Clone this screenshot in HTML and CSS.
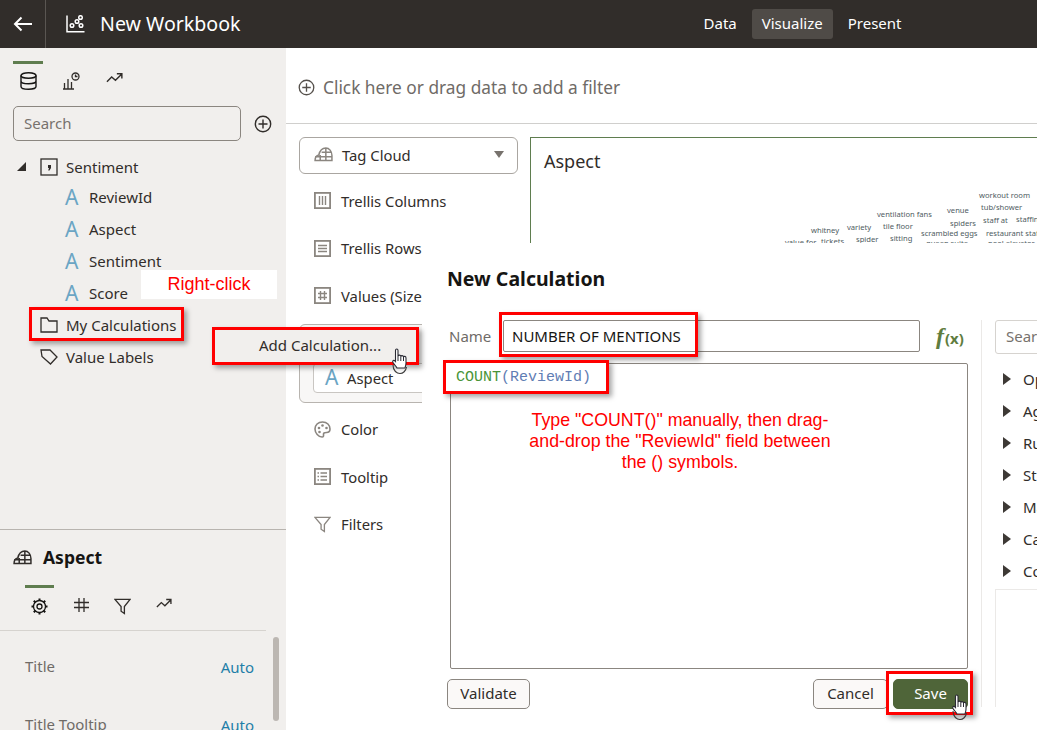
FILE: index.html
```html
<!DOCTYPE html>
<html lang="en">
<head>
  <meta charset="UTF-8">
  <meta name="viewport" content="width=device-width, initial-scale=1.0">
  <title>New Workbook</title>
  <link rel="stylesheet" href="styles.css">
</head>
<body>
  <svg class="defs" aria-hidden="true">
    <symbol id="i-tagcloud" viewBox="0 0 20 16">
      <path d="M1 14.500 C1 11 2 9 5 8.500 C6 4 9 1 12.500 1 C16 1 19 4.500 19 9 V14.500 Z M1 10.500 H19 M8 5.500 H17.500 M6.500 14.500 V8.500 M12.500 14.500 V1.500" fill="none" stroke="currentColor" stroke-width="1.600"/>
    </symbol>
    <symbol id="i-trend" viewBox="0 0 18 12">
      <path d="M1 10 L6 5 L10 8.500 L16.500 2 M11.500 1.500 H16.800 V6.500" fill="none" stroke="currentColor" stroke-width="1.500"/>
    </symbol>
    <symbol id="i-plus" viewBox="0 0 18 18">
      <circle cx="9" cy="9" r="7.700" fill="none" stroke="currentColor" stroke-width="1.400"/>
      <path d="M9 4.500 V13.500 M4.500 9 H13.500" stroke="currentColor" stroke-width="1.400"/>
    </symbol>
    <symbol id="i-funnel" viewBox="0 0 18 18">
      <path d="M1 1.500 H17 L11 9 V16.500 L7.500 14 V9 Z" fill="none" stroke="currentColor" stroke-width="1.400"/>
    </symbol>
    <symbol id="i-hand" viewBox="0 0 20 30">
      <path d="M2 17 C2 23 6 25.500 9 25.500 C12 25.500 15 23 15.500 19" fill="none" stroke="#3a3a3a" stroke-width="1.100"/>
      <path d="M4.500 2.500 C4.500 .5 7 .5 7 2.500 V8 C7.500 6.800 9.500 6.800 9.800 8.500 C10.200 7.300 12.200 7.300 12.500 9 C13 8 15 8 15 10 V15 C15 17 14.500 18.500 14 20 H6 C5.500 18.500 3.500 17 2 14.500 C1 12.500 2.800 11.500 4.500 13.500 Z" fill="#fff" stroke="#2a2a33" stroke-width="1.100"/>
      <path d="M7 8 V13 M9.800 8.500 V13 M12.500 9 V13" stroke="#2a2a33" stroke-width="1"/>
    </symbol>
  </svg>

  <div class="page">
    <header class="topbar">
      <button class="back-btn" aria-label="Back">
        <svg width="20" height="16" viewBox="0 0 20 16"><path d="M19 8 H2 M8.500 1.500 L2 8 L8.500 14.500" fill="none" stroke="#fff" stroke-width="2"/></svg>
      </button>
      <div class="brand">
        <svg width="19" height="18" viewBox="0 0 19 18"><path d="M1 .5 V16.800 H18.500" fill="none" stroke="#fff" stroke-width="1.500"/><g fill="none" stroke="#fff" stroke-width="1.500"><circle cx="6" cy="10.500" r="1.800"/><circle cx="11" cy="6.500" r="1.800"/><circle cx="14.500" cy="2.500" r="1.800"/><circle cx="15" cy="10.500" r="1.800"/></g></svg>
        <h1>New Workbook</h1>
      </div>
      <nav class="modes">
        <a href="#data">Data</a>
        <a href="#visualize" class="active">Visualize</a>
        <a href="#present">Present</a>
      </nav>
    </header>

    <main class="main">
      <aside class="sidebar">
        <div class="side-top">
          <div class="tabs">
            <span class="tab active">
              <svg width="17" height="18" viewBox="0 0 17 18"><g fill="none" stroke="#161513" stroke-width="1.400"><ellipse cx="8.500" cy="3.500" rx="7.500" ry="2.800"/><path d="M1 3.500 V14.500 C1 16 4 17.300 8.500 17.300 C13 17.300 16 16 16 14.500 V3.500 M1 9 C1 10.500 4 11.800 8.500 11.800 C13 11.800 16 10.500 16 9"/></g></svg>
            </span>
            <span class="tab">
              <svg width="18" height="18" viewBox="0 0 18 18"><g fill="none" stroke="#312d2a" stroke-width="1.300"><path d="M1 17 H12 M2.500 17 V11 M6 17 V7 M9.500 17 V10"/><circle cx="13.500" cy="4.500" r="3.500"/><path d="M13.500 2.500 V4.500 H15.500"/></g></svg>
            </span>
            <span class="tab">
              <svg width="17" height="12" class="ink"><use href="#i-trend"/></svg>
            </span>
          </div>
          <div class="search-row">
            <input class="side-search" placeholder="Search">
            <svg width="18" height="18" class="ink"><use href="#i-plus"/></svg>
          </div>
          <ul class="tree">
            <li class="tree-row root">
              <span class="tri-open"></span>
              <svg width="18" height="18" viewBox="0 0 18 18"><rect x="1" y="1" width="16" height="16" fill="none" stroke="#312d2a" stroke-width="1.300"/><path d="M8 7 H11 V10 L9.500 12.500 H8.200 L9 10 H8 Z" fill="#312d2a"/></svg>
              <span>Sentiment</span>
            </li>
            <li class="tree-row attr"><span class="letter">A</span><span>ReviewId</span></li>
            <li class="tree-row attr"><span class="letter">A</span><span>Aspect</span></li>
            <li class="tree-row attr"><span class="letter">A</span><span>Sentiment</span></li>
            <li class="tree-row attr"><span class="letter">A</span><span>Score</span></li>
            <li class="tree-row folder">
              <svg width="18" height="16" viewBox="0 0 18 16"><path d="M1 15 V1 H7 L9 4 H17 V15 Z" fill="none" stroke="#312d2a" stroke-width="1.300"/></svg>
              <span>My Calculations</span>
            </li>
            <li class="tree-row folder">
              <svg width="18" height="16" viewBox="0 0 18 16"><path d="M1 1 H10 L17 8 L10.500 15 L2 7.500 Z" fill="none" stroke="#312d2a" stroke-width="1.300"/></svg>
              <span>Value Labels</span>
            </li>
          </ul>
        </div>

        <div class="side-bottom">
          <div class="props-head">
            <svg width="19" height="15" class="ink"><use href="#i-tagcloud"/></svg>
            <h2>Aspect</h2>
          </div>
          <div class="prop-tabs">
            <span class="prop-tab active">
              <svg width="17" height="17" viewBox="0 0 17 17"><g fill="none" stroke="#161513"><circle cx="8.500" cy="8.500" r="2.500" stroke-width="1.300"/><circle cx="8.500" cy="8.500" r="6" stroke-width="1.300"/><path d="M8.500 .5 V3 M8.500 14 V16.500 M.5 8.500 H3 M14 8.500 H16.500 M2.800 2.800 L4.500 4.500 M12.500 12.500 L14.200 14.200 M14.200 2.800 L12.500 4.500 M4.500 12.500 L2.800 14.200" stroke-width="2"/></g></svg>
            </span>
            <span class="prop-tab">
              <svg width="15" height="14" viewBox="0 0 15 14"><path d="M5 0 V14 M10 0 V14 M0 4.500 H15 M0 9.500 H15" fill="none" stroke="#312d2a" stroke-width="1.300"/></svg>
            </span>
            <span class="prop-tab"><svg width="17" height="17" class="ink"><use href="#i-funnel"/></svg></span>
            <span class="prop-tab"><svg width="16" height="11" class="ink"><use href="#i-trend"/></svg></span>
          </div>
          <div class="prop-list">
            <div class="prop-row"><span class="prop-name">Title</span><span class="prop-val">Auto</span></div>
            <div class="prop-row"><span class="prop-name">Title Tooltip</span><span class="prop-val">Auto</span></div>
            <span class="scroll-thumb"></span>
          </div>
        </div>
      </aside>

      <section class="canvas">
        <div class="filter-bar">
          <svg width="17" height="17" class="dim"><use href="#i-plus"/></svg>
          <span>Click here or drag data to add a filter</span>
        </div>
        <div class="workspace">
          <div class="grammar">
            <div class="viz-select">
              <svg width="19" height="15" class="muted"><use href="#i-tagcloud"/></svg>
              <span>Tag Cloud</span>
              <span class="tri-down"></span>
            </div>
            <div class="gram-row">
              <svg width="17" height="17" viewBox="0 0 17 17"><g fill="none" stroke="#8b8680" stroke-width="1.800"><rect x=".9" y=".9" width="15.200" height="15.200"/><path d="M5.500 4 V13 M8.500 4 V13 M11.500 4 V13" stroke-width="1.400"/></g></svg>
              <span>Trellis Columns</span>
            </div>
            <div class="gram-row">
              <svg width="17" height="17" viewBox="0 0 17 17"><g fill="none" stroke="#8b8680" stroke-width="1.800"><rect x=".9" y=".9" width="15.200" height="15.200"/><path d="M4 5.500 H13 M4 8.500 H13 M4 11.500 H13" stroke-width="1.400"/></g></svg>
              <span>Trellis Rows</span>
            </div>
            <div class="gram-row">
              <svg width="17" height="17" viewBox="0 0 17 17"><g fill="none" stroke="#8b8680" stroke-width="1.800"><rect x=".9" y=".9" width="15.200" height="15.200"/><path d="M6.500 4 V13 M10.500 4 V13 M4 6.500 H13 M4 10.500 H13" stroke-width="1.400"/></g></svg>
              <span>Values (Size)</span>
            </div>
            <div class="drop-box">
              <div class="pill"><span class="letter">A</span><span>Aspect</span></div>
            </div>
            <div class="gram-row">
              <svg width="17" height="17" viewBox="0 0 17 17"><path d="M8.500 1 C4 1 1 4 1 8 C1 12 4.500 16 8 16 C10 16 9.500 14 9.500 13 C9.500 11.500 11 11.500 12.500 11.500 C15 11.500 16 10 16 8 C16 4 13 1 8.500 1 Z" fill="none" stroke="#8b8680" stroke-width="1.600"/><circle cx="5" cy="7" r="1.300" fill="#8b8680"/><circle cx="8.500" cy="4.500" r="1.300" fill="#8b8680"/><circle cx="12.500" cy="7" r="1.300" fill="#8b8680"/><circle cx="5.500" cy="11" r="1.300" fill="#8b8680"/></svg>
              <span>Color</span>
            </div>
            <div class="gram-row">
              <svg width="17" height="17" viewBox="0 0 17 17"><g fill="none" stroke="#8b8680" stroke-width="1.800"><rect x=".9" y=".9" width="15.200" height="15.200"/><path d="M6.500 5 H13 M6.500 8.500 H13 M6.500 12 H13 M3.500 5 H5 M3.500 8.500 H5 M3.500 12 H5" stroke-width="1.400"/></g></svg>
              <span>Tooltip</span>
            </div>
            <div class="gram-row">
              <svg width="17" height="17" class="muted"><use href="#i-funnel"/></svg>
              <span>Filters</span>
            </div>
          </div>

          <div class="viz">
            <h3>Aspect</h3>
            <span class="word w1">workout room</span>
            <span class="word w2">tub/shower</span>
            <span class="word w3">staff at</span>
            <span class="word w4">staffing</span>
            <span class="word w5">restaurant staff</span>
            <span class="word w6">pool elevator</span>
            <span class="word w7">venue</span>
            <span class="word w8">spiders</span>
            <span class="word w9">scrambled eggs</span>
            <span class="word w10">queen suite</span>
            <span class="word w11">ventilation fans</span>
            <span class="word w12">tile floor</span>
            <span class="word w13">sitting</span>
            <span class="word w14">variety</span>
            <span class="word w15">spider</span>
            <span class="word w16">whitney</span>
            <span class="word w17">tickets</span>
            <span class="word w18">value for</span>
          </div>
        </div>
      </section>
    </main>

    <div class="dialog">
      <div class="dialog-left">
        <h2 class="dialog-title">New Calculation</h2>
        <div class="name-row">
          <label class="name-label">Name</label>
          <input class="name-input" value="NUMBER OF MENTIONS">
          <span class="fx"><i>f</i><b>(x)</b></span>
        </div>
        <div class="editor"></div>
        <div class="dialog-foot">
          <button class="btn">Validate</button>
          <button class="btn push">Cancel</button>
          <button class="btn primary">Save</button>
        </div>
      </div>
      <div class="dialog-right">
        <input class="func-search" placeholder="Search">
        <ul class="func-list">
          <li><span class="tri-right"></span>Operators</li>
          <li><span class="tri-right"></span>Aggregate</li>
          <li><span class="tri-right"></span>Running Aggregate</li>
          <li><span class="tri-right"></span>String</li>
          <li><span class="tri-right"></span>Math</li>
          <li><span class="tri-right"></span>Calendar</li>
          <li><span class="tri-right"></span>Conversion</li>
        </ul>
        <div class="func-help"></div>
      </div>
    </div>

    <!-- tutorial callouts drawn over the screenshot -->
    <div class="note-right">Right-click</div>
    <div class="menu-add"><span>Add Calculation...</span></div>
    <div class="mark mark-folder"></div>
    <div class="mark mark-name"></div>
    <div class="mark mark-count"><code><span class="kw">COUNT</span><span class="arg">(ReviewId)</span></code></div>
    <div class="mark mark-save"></div>
    <p class="note-type">Type "COUNT()" manually, then drag-<br>and-drop the "ReviewId" field between<br>the () symbols.</p>
    <svg class="hand hand-menu" width="20" height="30"><use href="#i-hand"/></svg>
    <svg class="hand hand-save" width="20" height="30"><use href="#i-hand"/></svg>
  </div>
</body>
</html>
```

FILE: styles.css
```css
* {
  box-sizing: border-box;
}
html, body {
  margin: 0;
  padding: 0;
  height: 100%;
  overflow: hidden;
}
body {
  font-family: "Noto Sans", "Open Sans", sans-serif;
  font-size: 15px;
  color: #312d2a;
  background: #fff;
}
ul {
  list-style: none;
  margin: 0;
  padding: 0;
}
svg {
  display: block;
  flex: none;
}
.defs {
  width: 0;
  height: 0;
  position: absolute;
}
.ink {
  color: #312d2a;
}
.muted {
  color: #8b8680;
}
.dim {
  color: #55504b;
}
.page {
  position: relative;
  width: 1037px;
  height: 730px;
  overflow: hidden;
  display: flex;
  flex-direction: column;
}

/* top bar */
.topbar {
  height: 48px;
  flex: none;
  background: #312d2a;
  color: #fff;
  display: flex;
  align-items: center;
}
.back-btn {
  width: 46px;
  height: 48px;
  background: none;
  border: none;
  border-right: 1px solid #5a5652;
  padding: 0 0 0 13px;
}
.brand {
  display: flex;
  align-items: center;
  gap: 15px;
  margin-left: 20px;
}
.brand h1 {
  margin: 0 0 2px;
  font-size: 19.600px;
  font-weight: 400;
}
.modes {
  display: flex;
  align-items: center;
  gap: 5px;
  margin-left: 453px;
}
.modes a {
  color: #fff;
  text-decoration: none;
  height: 30px;
  line-height: 29px;
  padding: 0 10px;
  border-radius: 3px;
  font-size: 15px;
}
.modes a.active {
  background: #4f4b47;
}

.main {
  flex: 1;
  display: flex;
  min-height: 0;
}

/* left data panel */
.sidebar {
  width: 286px;
  flex: none;
  background: #f1efed;
  display: flex;
  flex-direction: column;
}
.side-top {
  height: 482px;
  flex: none;
  padding-top: 13px;
  border-bottom: 1px solid #b8b4af;
}
.tabs {
  display: flex;
  padding-left: 13px;
}
.tab {
  width: 30px;
  height: 36px;
  margin-right: 13px;
  border-top: 3px solid transparent;
  display: flex;
  justify-content: center;
  padding-top: 8px;
}
.tab.active {
  border-top-color: #5f7d4f;
}
.search-row {
  display: flex;
  align-items: center;
  gap: 13px;
  padding-left: 13px;
  margin-top: 9px;
}
.side-search {
  width: 228px;
  height: 35px;
  border: 1px solid #8b8680;
  border-radius: 5px;
  background: #f1efed;
  padding: 0 10px 2px;
  font: inherit;
}
.side-search::placeholder, .func-search::placeholder {
  color: #77726d;
}
.tree {
  margin-top: 11px;
}
.tree-row {
  height: 32px;
  display: flex;
  align-items: center;
}
.root {
  padding-left: 17px;
  height: 29px;
}
.root svg {
  margin-left: 14px;
  margin-right: 8px;
}
.tri-open {
  width: 0;
  height: 0;
  border-style: solid;
  border-width: 0 0 9px 9px;
  border-color: transparent transparent #312d2a transparent;
}
.attr {
  padding-left: 65px;
  gap: 11px;
}
.folder {
  padding-left: 40px;
  gap: 8px;
}
.letter {
  font-size: 21px;
  line-height: 1;
  color: #6ba5c4;
  width: 13px;
  display: inline-block;
}

/* properties panel */
.side-bottom {
  flex: 1;
  min-height: 0;
  overflow: hidden;
}
.props-head {
  display: flex;
  align-items: center;
  gap: 11px;
  padding: 15px 0 0 13px;
}
.props-head h2 {
  margin: 0;
  font-size: 17.500px;
  line-height: 24px;
  color: #161513;
}
.prop-tabs {
  display: flex;
  margin-top: 16px;
  margin-left: 25px;
  width: 241px;
  height: 45px;
}
.prop-tab {
  width: 29px;
  height: 42px;
  margin-right: 12.500px;
  border-top: 3px solid transparent;
  display: flex;
  justify-content: center;
  padding-top: 10px;
}
.prop-tab.active {
  border-top-color: #5f7d4f;
}
.prop-list {
  position: relative;
  border-top: 1px solid #d6d3cf;
  width: 266px;
  padding-left: 25px;
}
.prop-row {
  display: flex;
  justify-content: space-between;
  padding-right: 12px;
  height: 58px;
  padding-top: 26px;
  color: #6f6b67;
}
.prop-name {
  margin-top: -1px;
}
.prop-val {
  color: #1f7ea8;
}
.scroll-thumb {
  position: absolute;
  left: 273px;
  top: 6px;
  width: 6px;
  height: 84px;
  border-radius: 3px;
  background: #bcb7b2;
}

/* canvas */
.canvas {
  flex: 1;
  display: flex;
  flex-direction: column;
  min-width: 0;
}
.filter-bar {
  height: 76px;
  flex: none;
  border-bottom: 1px solid #d0cfcd;
  display: flex;
  align-items: center;
  gap: 8px;
  padding: 3px 0 0 12px;
  font-size: 17.300px;
  color: #6f6b67;
}
.workspace {
  flex: 1;
  display: flex;
  min-height: 0;
}
.grammar {
  width: 244px;
  flex: none;
  padding: 13px 12px 0 13px;
  font-size: 14.800px;
}
.viz-select {
  height: 37px;
  border: 1px solid #aaa6a1;
  border-radius: 6px;
  display: flex;
  align-items: center;
  gap: 9px;
  padding: 0 0 2px 14px;
  margin-bottom: 3px;
}
.tri-down {
  width: 0;
  height: 0;
  margin-left: auto;
  margin-right: 13px;
  border-style: solid;
  border-width: 7px 5.500px 0 5.500px;
  border-color: #77726d transparent transparent transparent;
}
.gram-row {
  height: 47.500px;
  display: flex;
  align-items: center;
  gap: 10px;
  padding-left: 15px;
  white-space: nowrap;
}
.drop-box {
  height: 79px;
  margin-top: 4px;
  border: 1px solid #b8b4af;
  border-radius: 6px;
  padding: 38px 8px 0 13px;
  background: #f8f7f6;
  margin-bottom: 3px;
}
.pill {
  height: 30px;
  background: #fff;
  border: 1px solid #c9c6c2;
  border-radius: 4px;
  display: flex;
  align-items: center;
  gap: 9px;
  padding-left: 11px;
}
.viz {
  flex: 1;
  position: relative;
  border-top: 1px solid #5f7d4f;
  border-left: 1px solid #5f7d4f;
  margin-top: 13px;
  overflow: hidden;
}
.viz h3 {
  margin: 11px 0 0 13px;
  font-size: 18px;
  font-weight: 400;
}
.word {
  position: absolute;
  font-size: 7.600px;
  line-height: 10px;
  color: #4e5b61;
  white-space: nowrap;
}
.w1 { left: 448px; top: 52px; }
.w2 { left: 450px; top: 64px; }
.w3 { left: 452px; top: 77px; }
.w4 { left: 485px; top: 76px; }
.w5 { left: 455px; top: 90px; }
.w6 { left: 457px; top: 100px; }
.w7 { left: 416px; top: 67px; }
.w8 { left: 419px; top: 80px; }
.w9 { left: 390px; top: 90px; }
.w10 { left: 395px; top: 100px; }
.w11 { left: 346px; top: 71px; }
.w12 { left: 352px; top: 83px; }
.w13 { left: 359px; top: 95px; }
.w14 { left: 316px; top: 84px; }
.w15 { left: 325px; top: 96px; }
.w16 { left: 280px; top: 87px; }
.w17 { left: 290px; top: 98px; }
.w18 { left: 254px; top: 99px; }

/* calculation dialog */
.dialog {
  position: absolute;
  left: 422px;
  top: 243px;
  right: 0;
  bottom: 0;
  background: #fff;
  display: flex;
  padding-left: 25px;
}
.dialog-left {
  width: 521px;
  flex: none;
  display: flex;
  flex-direction: column;
}
.dialog-title {
  margin: 0;
  padding-top: 23px;
  font-size: 19.500px;
  line-height: 26px;
  color: #161513;
}
.name-row {
  display: flex;
  align-items: center;
  margin-top: 28px;
  height: 32px;
}
.name-label {
  width: 56px;
  padding-left: 2px;
  color: #6f6b67;
}
.name-input {
  width: 417px;
  height: 32px;
  border: 1px solid #8b8680;
  border-radius: 2px;
  padding: 0 8px;
  font: inherit;
  color: #161513;
}
.fx {
  margin-left: 16px;
  color: #5f7d3f;
  white-space: nowrap;
  display: flex;
  align-items: center;
}
.fx i {
  font-family: "Liberation Serif", serif;
  font-size: 24px;
  font-weight: 700;
}
.fx b {
  font-size: 15px;
  margin-left: 1px;
  margin-top: 4px;
}
.editor {
  margin: 11px 0 0 3px;
  height: 306px;
  border: 1px solid #8b8680;
  border-radius: 2px;
}
.dialog-foot {
  display: flex;
  gap: 5px;
  margin-top: 10px;
}
.btn {
  height: 30px;
  width: 75px;
  border: 1px solid #8b8680;
  border-radius: 5px;
  background: #fbf9f8;
  font: inherit;
  color: #312d2a;
  padding: 0 0 2px;
}
.btn:first-child {
  width: 83px;
}
.push {
  margin-left: auto;
}
.primary {
  background: #4f6539;
  border-color: #4f6539;
  color: #fff;
}
.dialog-right {
  flex: 1;
  min-width: 0;
  margin: 77px 0 23px 13px;
  border-left: 1px solid #ebe9e7;
  padding-left: 13px;
  overflow: hidden;
}
.func-search {
  width: 200px;
  height: 34px;
  border: 1px solid #d6d3cf;
  border-radius: 3px;
  padding: 0 10px 2px;
  font: inherit;
  display: block;
}
.func-list {
  margin-top: 9px;
}
.func-list li {
  height: 32px;
  display: flex;
  align-items: center;
  gap: 12px;
  padding-left: 8px;
  white-space: nowrap;
}
.tri-right {
  width: 0;
  height: 0;
  flex: none;
  border-style: solid;
  border-width: 6.500px 0 6.500px 8px;
  border-color: transparent transparent transparent #3d3935;
}
.func-help {
  width: 200px;
  height: 124px;
  margin-top: 2px;
  border: 1px solid #ebe9e7;
}

/* callouts */
.mark {
  position: absolute;
  border: 3px solid #f00;
  box-shadow: 3px 3px 5px rgba(0, 0, 0, .35);
}
.mark-folder {
  left: 29px;
  top: 307px;
  width: 155px;
  height: 34px;
}
.mark-name {
  left: 499px;
  top: 312px;
  width: 199px;
  height: 45px;
}
.mark-count {
  left: 443px;
  top: 360px;
  width: 166px;
  height: 34px;
  background: #fff;
  padding: 2px 0 0 10px;
}
.mark-count code {
  font-family: "Liberation Mono", monospace;
  font-size: 15px;
  line-height: 18px;
}
.kw {
  color: #4a9438;
}
.arg {
  color: #5f7db4;
}
.mark-save {
  left: 886px;
  top: 671px;
  width: 87px;
  height: 44px;
}
.menu-add {
  position: absolute;
  left: 212px;
  top: 327px;
  width: 207px;
  height: 38px;
  border: 3px solid #f00;
  background: #f1efed;
  box-shadow: 3px 3px 5px rgba(0, 0, 0, .35);
  padding: 5px 0 0 44px;
}
.note-right {
  position: absolute;
  left: 141px;
  top: 270px;
  width: 136px;
  height: 29px;
  background: #fff;
  color: #f00;
  font-family: "Liberation Sans", Arial, sans-serif;
  font-size: 18px;
  line-height: 29px;
  text-align: center;
}
.note-type {
  position: absolute;
  left: 500px;
  top: 410px;
  width: 360px;
  margin: 0;
  color: #f00;
  font-family: "Liberation Sans", Arial, sans-serif;
  font-size: 17.800px;
  line-height: 21px;
  text-align: center;
}
.hand {
  position: absolute;
}
.hand-menu {
  left: 391px;
  top: 348px;
}
.hand-save {
  left: 951px;
  top: 694px;
}
```
